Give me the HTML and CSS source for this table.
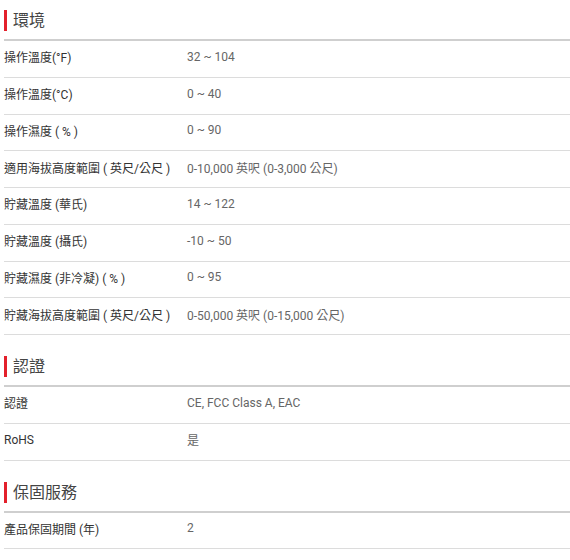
FILE: index.html
```html
<!DOCTYPE html>
<html lang="zh-Hant">
<head>
<meta charset="utf-8">
<title>規格</title>
<link rel="stylesheet" href="styles.css">
</head>
<body>
<div class="specs">
  <section class="group">
    <h2 class="group-title">環境</h2>
    <div class="row"><div class="label">操作溫度(°F)</div><div class="value">32 ~ 104</div></div>
    <div class="row"><div class="label">操作溫度(°C)</div><div class="value">0 ~ 40</div></div>
    <div class="row"><div class="label">操作濕度 ( % )</div><div class="value">0 ~ 90</div></div>
    <div class="row"><div class="label">適用海拔高度範圍 ( 英尺/公尺 )</div><div class="value">0-10,000 英呎 (0-3,000 公尺)</div></div>
    <div class="row"><div class="label">貯藏溫度 (華氏)</div><div class="value">14 ~ 122</div></div>
    <div class="row"><div class="label">貯藏溫度 (攝氏)</div><div class="value">-10 ~ 50</div></div>
    <div class="row"><div class="label">貯藏濕度 (非冷凝) ( % )</div><div class="value">0 ~ 95</div></div>
    <div class="row"><div class="label">貯藏海拔高度範圍 ( 英尺/公尺 )</div><div class="value">0-50,000 英呎 (0-15,000 公尺)</div></div>
  </section>
  <section class="group">
    <h2 class="group-title">認證</h2>
    <div class="row"><div class="label">認證</div><div class="value">CE, FCC Class A, EAC</div></div>
    <div class="row"><div class="label">RoHS</div><div class="value">是</div></div>
  </section>
  <section class="group">
    <h2 class="group-title">保固服務</h2>
    <div class="row"><div class="label">產品保固期間 (年)</div><div class="value">2</div></div>
  </section>
</div>
</body>
</html>
```

FILE: styles.css
```css
html, body {
  margin: 0;
  padding: 0;
  background: #fff;
}

body {
  font-family: Roboto, "Noto Sans CJK TC", "Noto Sans", sans-serif;
  font-size: 12px;
  color: #333;
}

.specs {
  padding-left: 4px;
}

.group + .group {
  margin-top: 11px;
}

.group-title {
  margin: 0;
  height: 41px;
  box-sizing: border-box;
  padding-top: 10px;
  border-bottom: 2px solid #cfcfcf;
  font-size: 16px;
  font-weight: 400;
  line-height: 21px;
  color: #444;
  display: flex;
  align-items: flex-start;
}

.group-title::before {
  content: "";
  display: block;
  width: 3px;
  height: 21px;
  background: #e3202b;
  margin-right: 6px;
  flex: none;
}

.row {
  display: grid;
  grid-template-columns: 183px 1fr;
  align-items: center;
  height: 36.75px;
  box-sizing: border-box;
  border-bottom: 1px solid #dcdcdc;
  padding-bottom: 4px;
}

.label {
  color: #333;
}

.value {
  color: #666;
}
```
